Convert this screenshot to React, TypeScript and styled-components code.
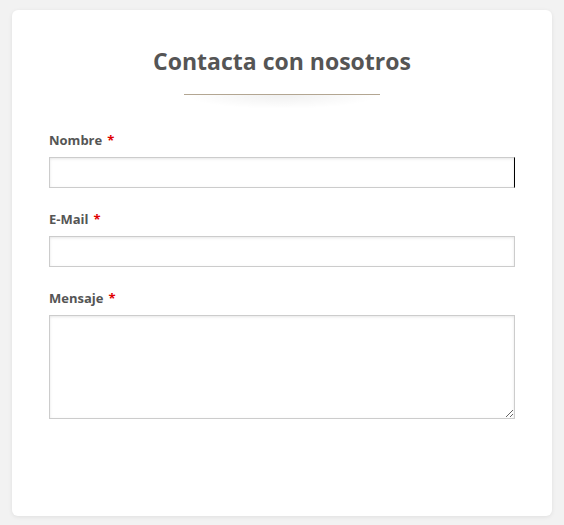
import React from 'react';
import styled, { createGlobalStyle } from 'styled-components';

const GlobalStyle = createGlobalStyle`
  html, body {
    margin: 0;
    padding: 0;
    background: #f2f2f2;
  }
  body {
    font-family: 'Open Sans', 'Liberation Sans', sans-serif;
  }
`;

const Page = styled.div`
  padding: 10px 12px 9px;
`;

const Card = styled.div`
  box-sizing: border-box;
  width: 540px;
  height: 506px;
  background: #fff;
  border-radius: 6px;
  box-shadow: 0 1px 4px rgba(0, 0, 0, 0.08);
  padding: 34px 37px 0;
`;

const Title = styled.h2`
  margin: 0;
  text-align: center;
  font-size: 23px;
  line-height: 34px;
  font-weight: 700;
  color: #555;
`;

const Divider = styled.div`
  width: 196px;
  height: 14px;
  margin: 16px auto 22px;
  border-top: 1px solid #b3a692;
  background: radial-gradient(ellipse at top, rgba(0, 0, 0, 0.06), rgba(0, 0, 0, 0) 70%);
`;

const Field = styled.div`
  margin-bottom: 22px;
`;

const Label = styled.label`
  display: block;
  font-size: 13px;
  line-height: 18px;
  font-weight: 700;
  color: #555;
  margin-bottom: 8px;
`;

const Required = styled.span`
  color: #e00000;
  margin-left: 5px;
`;

const Input = styled.input<{ $focused?: boolean }>`
  box-sizing: border-box;
  display: block;
  width: 466px;
  height: 31px;
  margin: 0;
  border: 1px solid #ccc;
  border-right-color: ${(p) => (p.$focused ? '#000' : '#ccc')};
  box-shadow: inset 0 1px 3px rgba(0, 0, 0, 0.1);
  background: #fff;
  outline: none;
`;

const TextArea = styled.textarea`
  box-sizing: border-box;
  display: block;
  width: 466px;
  height: 104px;
  margin: 0;
  border: 1px solid #ccc;
  box-shadow: inset 0 1px 3px rgba(0, 0, 0, 0.1);
  background: #fff;
  outline: none;
`;

export default function App() {
  return (
    <>
      <GlobalStyle />
      <Page>
        <Card>
          <Title>Contacta con nosotros</Title>
          <Divider />
          <Field>
            <Label>
              Nombre<Required>*</Required>
            </Label>
            <Input type="text" $focused />
          </Field>
          <Field>
            <Label>
              E-Mail<Required>*</Required>
            </Label>
            <Input type="email" />
          </Field>
          <Field>
            <Label>
              Mensaje<Required>*</Required>
            </Label>
            <TextArea />
          </Field>
        </Card>
      </Page>
    </>
  );
}
